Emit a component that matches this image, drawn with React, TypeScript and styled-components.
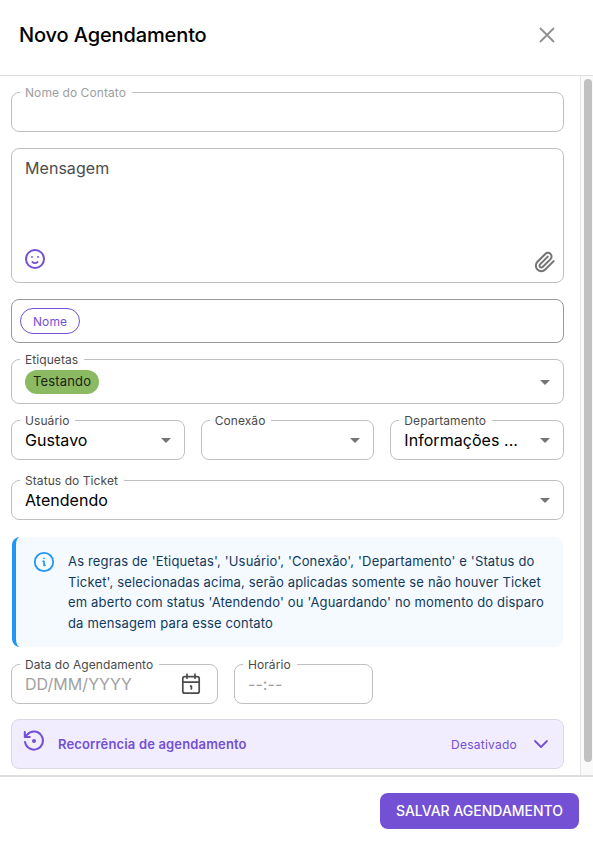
import React from 'react';
import styled, { createGlobalStyle, css } from 'styled-components';

const GlobalStyle = createGlobalStyle`
  *, *::before, *::after { box-sizing: border-box; }
  body { margin: 0; background: #fff; }
`;

const Dialog = styled.div`
  display: flex;
  flex-direction: column;
  width: 593px;
  height: 845px;
  overflow: hidden;
  background: #fff;
  color: #000;
  font-family: Inter, 'Liberation Sans', sans-serif;
  font-size: 16px;
  letter-spacing: 0.003em;
`;

const Header = styled.header`
  display: flex;
  align-items: center;
  justify-content: space-between;
  height: 76px;
  padding: 0 34px 6px 19px;
  border-bottom: 1px solid #dedede;
`;

const Title = styled.h2`
  margin: 0;
  font-size: 20px;
  font-weight: 500;
  line-height: 32px;
  letter-spacing: -0.006em;
`;

const IconButton = styled.button`
  display: flex;
  padding: 0;
  border: 0;
  background: none;
  color: inherit;
`;

const Body = styled.main`
  display: flex;
  height: 699px;
`;

const Form = styled.form`
  display: flex;
  flex: 1;
  flex-direction: column;
  padding: 16px 16px 0 11px;
`;

const ScrollTrack = styled.div`
  width: 13px;
  padding: 3px 1px 0 3px;
  border-left: 1px solid #e6e6e6;
  background: #fafafa;
`;

const ScrollThumb = styled.div`
  width: 8px;
  height: 683px;
  border-radius: 4px;
  background: #c1c1c1;
`;

const Field = styled.div<{ $height?: number; $tone?: string }>`
  position: relative;
  display: flex;
  align-items: center;
  justify-content: space-between;
  min-width: 0;
  height: ${(p) => p.$height ?? 40}px;
  padding: 0 13px;
  border: 1px solid ${(p) => p.$tone ?? '#c0c0c0'};
  border-radius: 8px;
`;

const FieldLabel = styled.label<{ $muted?: boolean }>`
  position: absolute;
  top: -9px;
  left: 8px;
  padding: 0 6px 0 5px;
  background: #fff;
  color: ${(p) => (p.$muted ? '#9e9e9e' : '#4a4a4a')};
  font-size: 12px;
  line-height: 17px;
  letter-spacing: 0.006em;
  white-space: nowrap;
`;

const Value = styled.span<{ $placeholder?: boolean }>`
  color: ${(p) => (p.$placeholder ? '#a0a0a0' : '#000')};
  line-height: 23px;
  white-space: nowrap;
`;

const MessageBox = styled(Field)`
  flex-direction: column;
  align-items: stretch;
  margin-top: 16px;
  padding: 8px 7px 9px 13px;
`;

const MessageText = styled.span`
  color: #4c4c4c;
  line-height: 23px;
`;

const MessageTools = styled.div`
  display: flex;
  align-items: flex-end;
  justify-content: space-between;
`;

const ToolButton = styled(IconButton)<{ $lift?: number; $color: string }>`
  margin-bottom: ${(p) => p.$lift ?? 0}px;
  color: ${(p) => p.$color};
`;

const VariableBox = styled(Field)`
  margin-top: 16px;
  padding: 0 8px;
`;

const chip = css`
  display: inline-flex;
  align-items: center;
  font-size: 13px;
`;

const VariableChip = styled.span`
  ${chip}
  height: 26px;
  padding: 0 12px;
  border: 1px solid #7350d4;
  border-radius: 13px;
  color: #7350d4;
  font-size: 12px;
  letter-spacing: 0.006em;
`;

const TagChip = styled.span`
  ${chip}
  height: 24px;
  padding: 0 8px 2px;
  border-radius: 12px;
  background: #8bba63;
  color: #1b2413;
  letter-spacing: 0.012em;
`;

const TagField = styled(Field)`
  margin-top: 16px;
`;

const SelectRow = styled.div`
  display: grid;
  grid-template-columns: repeat(3, 1fr);
  gap: 16px;
  margin: 16px 0 20px;
`;

const Notice = styled.aside`
  display: flex;
  height: 110px;
  margin: 17px 1px;
  padding: 14px 0 0 17px;
  border-left: 4px solid #2196f3;
  border-radius: 8px;
  background: #f4faff;
`;

const NoticeText = styled.p`
  margin: 0 0 0 13px;
  color: #12395b;
  font-size: 13px;
  line-height: 20.6px;
  letter-spacing: 0.012em;
  white-space: nowrap;
`;

const DateRow = styled.div`
  display: grid;
  grid-template-columns: 207px 139px;
  gap: 16px;
`;

const DateField = styled(Field)`
  padding-right: 16px;
`;

const Recurrence = styled.button`
  display: flex;
  align-items: center;
  height: 50px;
  margin-top: 15px;
  padding: 0 12px 0 10px;
  border: 1px solid #dcd9e4;
  border-radius: 8px;
  background: #f1ecfe;
  color: #7350d4;
  font-family: inherit;
`;

const RecurrenceIcon = styled.span`
  display: flex;
  padding-bottom: 6px;
`;

const RecurrenceTitle = styled.span`
  flex: 1;
  margin-left: 12px;
  font-size: 13px;
  font-weight: 600;
  letter-spacing: 0.012em;
  text-align: left;
`;

const RecurrenceState = styled.span`
  margin-right: 14px;
  font-size: 12px;
  letter-spacing: 0.02em;
`;

const Footer = styled.footer`
  display: flex;
  align-items: center;
  justify-content: flex-end;
  height: 70px;
  padding: 0 14px 0 0;
  border-top: 2px solid #dedede;
`;

const SaveButton = styled.button`
  width: 199px;
  height: 36px;
  padding: 0 0 2px;
  border: 0;
  border-radius: 8px;
  background: #7350d4;
  color: #fff;
  font-family: inherit;
  font-size: 14px;
  font-weight: 500;
  letter-spacing: 0;
`;

const stroke = {
  fill: 'none',
  stroke: 'currentColor',
  strokeLinecap: 'round' as const,
  strokeLinejoin: 'round' as const,
};

const CloseIcon = () => (
  <svg width="24" height="24" viewBox="0 0 24 24" {...stroke} stroke="#8f8f8f" strokeWidth="1.8">
    <path d="M5.5 5.5l13 13M18.5 5.5l-13 13" />
  </svg>
);

const SmileIcon = () => (
  <svg width="20" height="20" viewBox="0 0 20 20" {...stroke} strokeWidth="2">
    <circle cx="10" cy="10" r="9" />
    <path d="M7 8h.01M13 8h.01M7.4 13c1.4 1.3 3.8 1.3 5.2 0" strokeWidth="1.8" />
  </svg>
);

const ClipIcon = () => (
  <svg width="22" height="22" viewBox="0 0 24 24" {...stroke} strokeWidth="2.2">
    <path d="m21.44 11.05-9.19 9.19a6 6 0 0 1-8.49-8.49l8.57-8.57A4 4 0 1 1 18 8.84l-8.59 8.57a2 2 0 0 1-2.83-2.83l8.49-8.48" />
  </svg>
);

const ArrowIcon = () => (
  <svg width="10" height="6" viewBox="0 0 10 6">
    <path d="M0 1h10L5 6z" fill="#757575" />
  </svg>
);

const InfoIcon = () => (
  <svg width="22" height="22" viewBox="0 0 22 22" {...stroke} stroke="#2196f3" strokeWidth="1.8">
    <circle cx="11" cy="11" r="9.2" />
    <path d="M11 7.4h.01M10 10.2h1v4.2h1" strokeWidth="1.6" />
  </svg>
);

const CalendarIcon = () => (
  <svg width="20" height="22" viewBox="0 0 20 22" {...stroke} stroke="#4c4c4c" strokeWidth="1.7">
    <rect x="1.8" y="3.6" width="16.4" height="16.6" rx="2" />
    <path d="M1.8 9.2h16.4M6 1.2v4M14 1.2v4M9.6 13.2h.8v2.8" />
  </svg>
);

const HistoryIcon = () => (
  <svg width="24" height="24" viewBox="0 0 24 24" {...stroke} strokeWidth="2">
    <path d="M3.05 13a9 9 0 1 0 2-7.2L3.4 7.6M2.8 3v5h5" />
    <circle cx="12" cy="12" r="1" fill="currentColor" />
  </svg>
);

const ChevronIcon = () => (
  <svg width="20" height="20" viewBox="0 0 20 20" {...stroke} strokeWidth="1.8">
    <path d="M4 7l6 6 6-6" />
  </svg>
);

const SelectField = ({ label, value }: { label: string; value?: string }) => (
  <Field>
    <FieldLabel>{label}</FieldLabel>
    <Value>{value}</Value>
    <ArrowIcon />
  </Field>
);

export default function App() {
  return (
    <>
      <GlobalStyle />
      <Dialog role="dialog">
        <Header>
          <Title>Novo Agendamento</Title>
          <IconButton aria-label="Fechar">
            <CloseIcon />
          </IconButton>
        </Header>
        <Body>
          <Form>
            <Field>
              <FieldLabel $muted>Nome do Contato</FieldLabel>
            </Field>
            <MessageBox $height={135}>
              <MessageText>Mensagem</MessageText>
              <MessageTools>
                <ToolButton type="button" $color="#7350d4" $lift={4}>
                  <SmileIcon />
                </ToolButton>
                <ToolButton type="button" $color="#757575">
                  <ClipIcon />
                </ToolButton>
              </MessageTools>
            </MessageBox>
            <VariableBox $height={44} $tone="#999">
              <VariableChip>Nome</VariableChip>
            </VariableBox>
            <TagField $height={45}>
              <FieldLabel>Etiquetas</FieldLabel>
              <TagChip>Testando</TagChip>
              <ArrowIcon />
            </TagField>
            <SelectRow>
              <SelectField label="Usuário" value="Gustavo" />
              <SelectField label="Conexão" />
              <SelectField label="Departamento" value="Informações ..." />
            </SelectRow>
            <SelectField label="Status do Ticket" value="Atendendo" />
            <Notice>
              <InfoIcon />
              <NoticeText>
                As regras de 'Etiquetas', 'Usuário', 'Conexão', 'Departamento' e 'Status do
                <br />
                Ticket', selecionadas acima, serão aplicadas somente se não houver Ticket
                <br />
                em aberto com status 'Atendendo' ou 'Aguardando' no momento do disparo
                <br />
                da mensagem para esse contato
              </NoticeText>
            </Notice>
            <DateRow>
              <DateField>
                <FieldLabel>Data do Agendamento</FieldLabel>
                <Value $placeholder>DD/MM/YYYY</Value>
                <CalendarIcon />
              </DateField>
              <Field>
                <FieldLabel>Horário</FieldLabel>
                <Value $placeholder>--:--</Value>
              </Field>
            </DateRow>
            <Recurrence type="button">
              <RecurrenceIcon>
                <HistoryIcon />
              </RecurrenceIcon>
              <RecurrenceTitle>Recorrência de agendamento</RecurrenceTitle>
              <RecurrenceState>Desativado</RecurrenceState>
              <ChevronIcon />
            </Recurrence>
          </Form>
          <ScrollTrack>
            <ScrollThumb />
          </ScrollTrack>
        </Body>
        <Footer>
          <SaveButton>SALVAR AGENDAMENTO</SaveButton>
        </Footer>
      </Dialog>
    </>
  );
}
